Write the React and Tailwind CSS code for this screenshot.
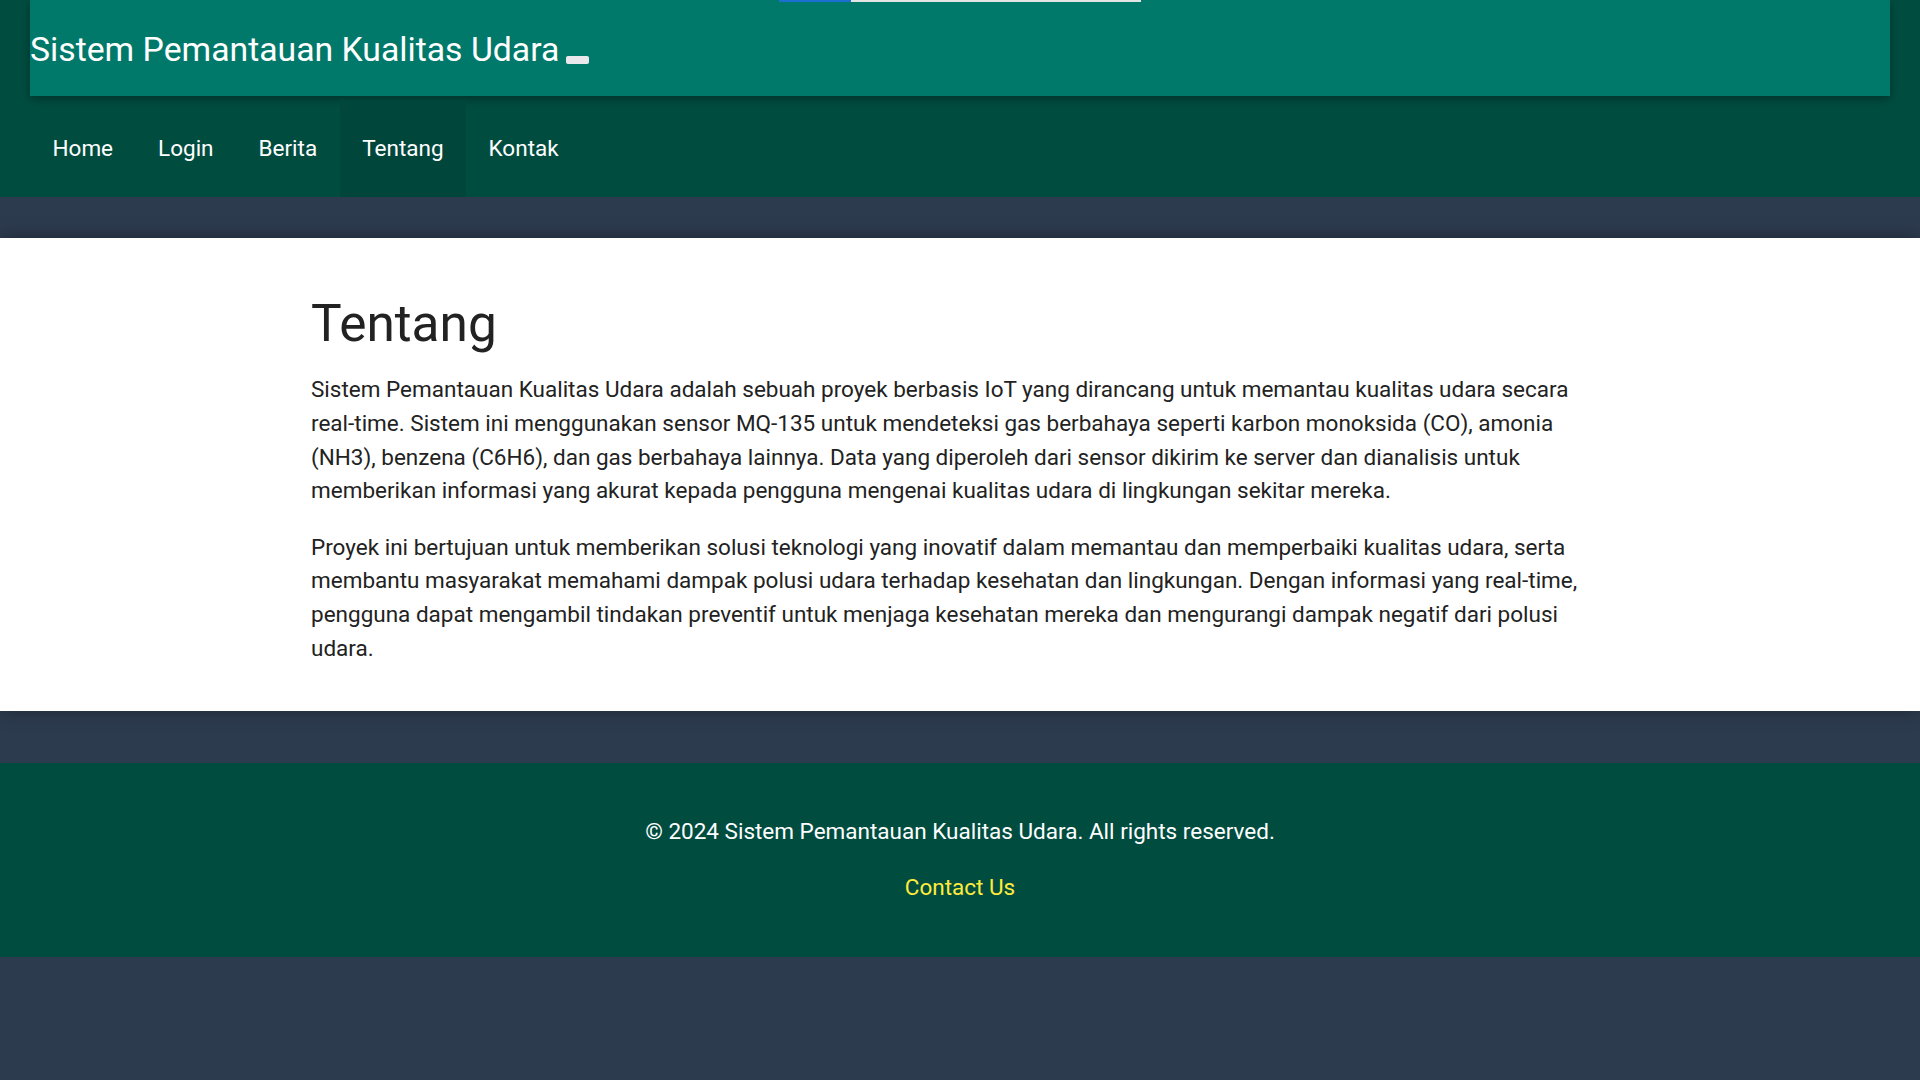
import React from "react";

const links = ["Home", "Login", "Berita", "Tentang", "Kontak"];

function App() {
  return (
    <div className="min-h-screen bg-[#2d3b4f] font-['Roboto',sans-serif]">
      <div className="relative bg-[#004d40]">
        <div className="absolute top-0 left-[779px] z-10 h-[2px] w-[362px] bg-[#e4e4e4]">
          <div className="h-full w-[72px] bg-[#1a6fd1]" />
        </div>
        <header className="mx-[30px] h-[96px] bg-[#00796b] pt-[30px] shadow-[0_3px_10px_rgba(0,0,0,0.35)]">
          <h1 className="text-[33.75px] leading-[39px] font-normal text-white">
            Sistem Pemantauan Kualitas Udara{" "}
            <span className="-ml-[2px] inline-block h-[8px] w-[23px] rounded-[2px] bg-[#e9e9ed] align-[-3px]" />
          </h1>
        </header>
        <nav className="mt-[4px] flex h-[97px] pl-[30px]">
          {links.map((l) => (
            <a
              key={l}
              href="#"
              className={`flex h-full items-center px-[22.5px] text-[22.5px] leading-[33.75px] text-white ${
                l === "Tentang" ? "bg-[#00463b]" : ""
              }`}
            >
              {l}
            </a>
          ))}
        </nav>
      </div>

      <div className="pt-[41px] pb-[52px]">
        <main className="bg-white pt-[56px] pb-[45px] shadow-[0_0_18px_rgba(0,0,0,0.35)]">
          <div className="mx-auto max-w-[1298px] text-[#222]">
            <h2 className="mb-[19px] text-[51.4px] leading-[60px] font-normal">Tentang</h2>
            <p className="text-[22.5px] leading-[33.75px]">
              Sistem Pemantauan Kualitas Udara adalah sebuah proyek berbasis IoT yang dirancang untuk memantau kualitas udara secara real-time. Sistem ini menggunakan sensor MQ-135 untuk mendeteksi gas berbahaya seperti karbon monoksida (CO), amonia (NH3), benzena (C6H6), dan gas berbahaya lainnya. Data yang diperoleh dari sensor dikirim ke server dan dianalisis untuk memberikan informasi yang akurat kepada pengguna mengenai kualitas udara di lingkungan sekitar mereka.
            </p>
            <p className="mt-[22.5px] text-[22.5px] leading-[33.75px]">
              Proyek ini bertujuan untuk memberikan solusi teknologi yang inovatif dalam memantau dan memperbaiki kualitas udara, serta membantu masyarakat memahami dampak polusi udara terhadap kesehatan dan lingkungan. Dengan informasi yang real-time, pengguna dapat mengambil tindakan preventif untuk menjaga kesehatan mereka dan mengurangi dampak negatif dari polusi udara.
            </p>
          </div>
        </main>
      </div>

      <footer className="flex flex-col items-center gap-[22.5px] bg-[#004d40] pt-[52px] pb-[52px] text-[22.5px] leading-[33.75px]">
        <p className="text-white">© 2024 Sistem Pemantauan Kualitas Udara. All rights reserved.</p>
        <a href="#" className="text-[#ffeb3b]">
          Contact Us
        </a>
      </footer>
    </div>
  );
}

export default App;
